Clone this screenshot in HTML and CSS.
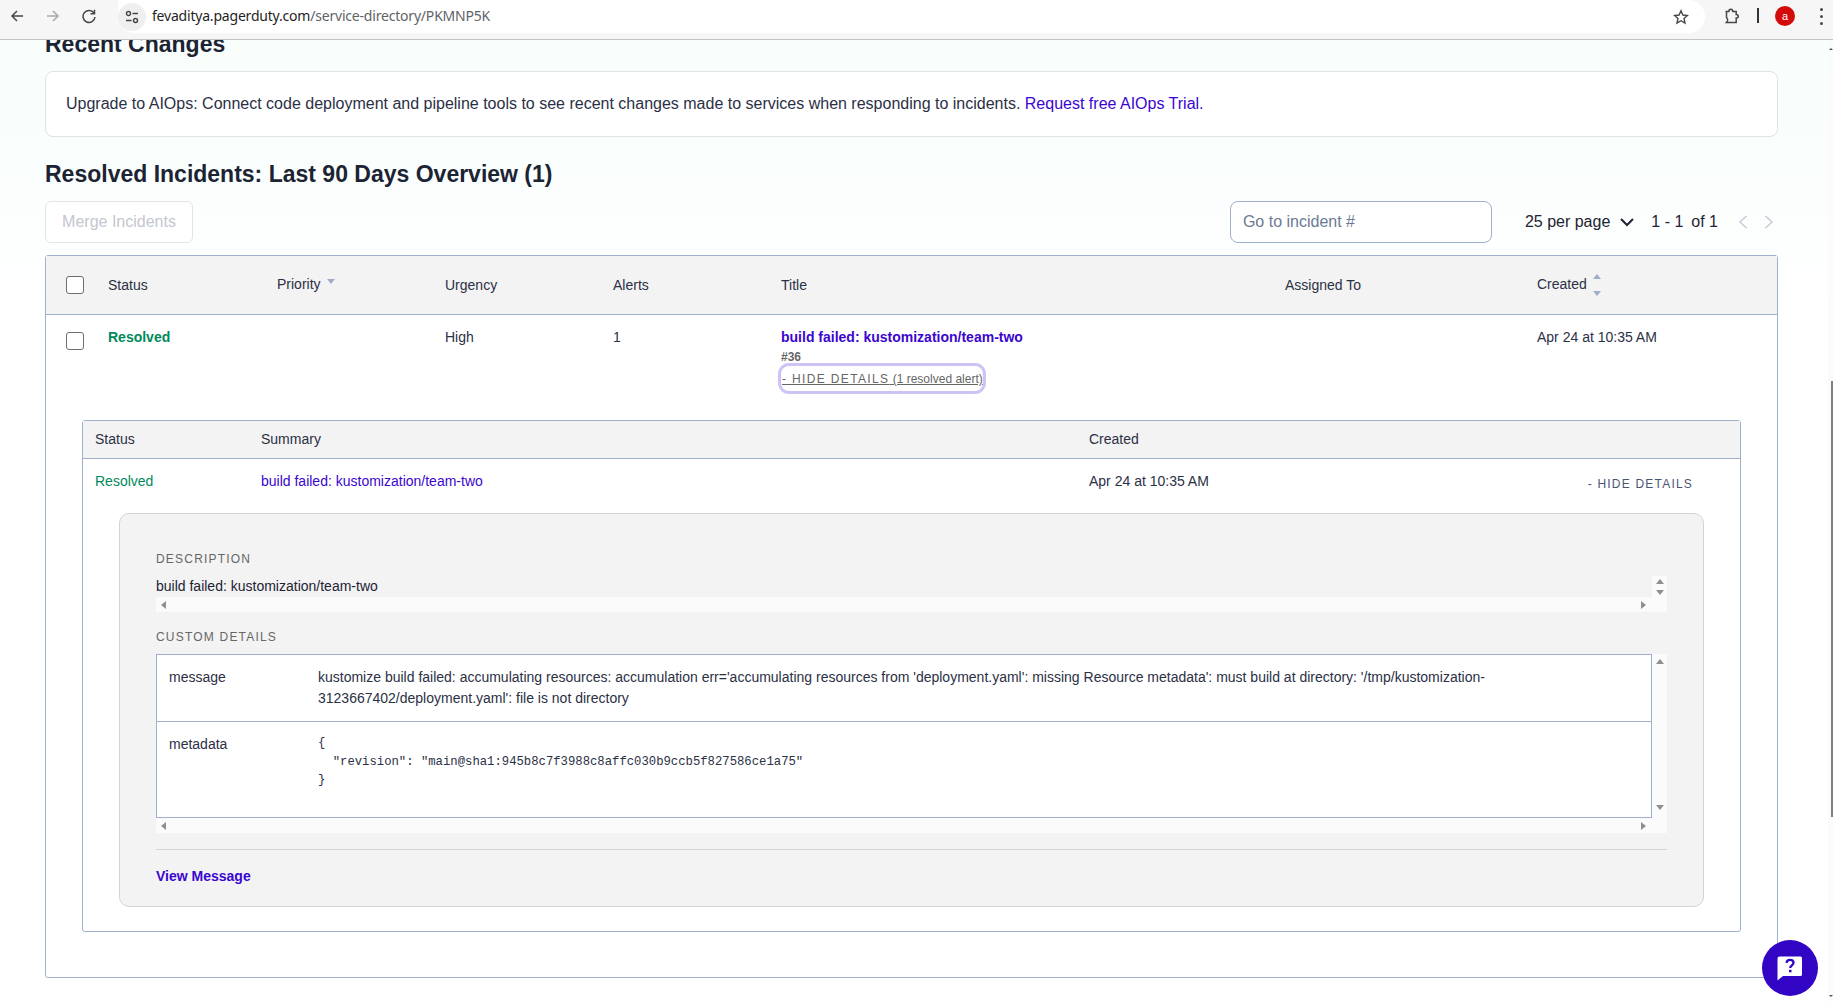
FILE: index.html
```html
<!DOCTYPE html>
<html>
	<head>
		<meta charset="utf-8">
		<title>Service Directory - PagerDuty</title>
		<link rel="stylesheet" href="styles.css">
	</head>
	<body>
		<!-- browser bar -->
		<div class="chrome">
			<svg class="nav-icon first" viewBox="0 0 16 16"><path d="M14 8H3M8 3L3 8l5 5" fill="none" stroke="#45474a" stroke-width="1.5"/></svg>
			<svg class="nav-icon" viewBox="0 0 16 16"><path d="M2 8h11M8 3l5 5-5 5" fill="none" stroke="#a8aaad" stroke-width="1.5"/></svg>
			<svg class="nav-icon" viewBox="0 0 16 16"><path d="M13.2 5.4A6 6 0 1 0 14 9M13.5 1.8v4h-4" fill="none" stroke="#45474a" stroke-width="1.5"/></svg>
			<div class="urlbar">
				<span class="tune">
					<svg width="14" height="14" viewBox="0 0 14 14"><circle cx="3.5" cy="3.5" r="2" fill="none" stroke="#45474a" stroke-width="1.4"/><path d="M7.5 3.5H13M1 10.5h5.500" stroke="#45474a" stroke-width="1.5"/><circle cx="10.500" cy="10.500" r="2" fill="none" stroke="#45474a" stroke-width="1.4"/></svg>
				</span>
				<span class="url">fevaditya.pagerduty.com<span class="url-path">/service-directory/PKMNP5K</span></span>
				<svg class="star" width="16" height="16" viewBox="0 0 16 16"><path d="M8 1.800l1.900 4.200 4.500.5-3.400 3 1 4.500-4-2.300-4 2.300 1-4.500-3.400-3 4.500-.5z" fill="none" stroke="#45474a" stroke-width="1.400"/></svg>
			</div>
			<svg class="puzzle" width="16" height="16" viewBox="0 0 16 16"><path d="M1.500 3.500h3.300c0-3 4-3 4 0h3.400v3c2.800 0 2.800 3.500 0 3.500v4.500H2.500c1.500-1.500 1.500-3.500 0-5v-6z" fill="none" stroke="#45474a" stroke-width="1.500"/></svg>
			<span class="bar-divider"></span>
			<span class="avatar">a</span>
			<span class="dots"><i></i><i></i><i></i></span>
		</div>

		<div class="page">
			<h2 class="clipped">Recent Changes</h2>
			<div class="upgrade">Upgrade to AIOps: Connect code deployment and pipeline tools to see recent changes made to services when responding to incidents. <a href="#">Request free AIOps Trial.</a></div>

			<h2 class="title">Resolved Incidents: Last 90 Days Overview (1)</h2>
			<div class="toolbar">
				<button class="merge">Merge Incidents</button>
				<input class="goto" placeholder="Go to incident #">
				<span class="per-page">25 per page</span>
				<svg class="chev" width="16" height="10" viewBox="0 0 16 10"><path d="M2 2l6 6 6-6" fill="none" stroke="#1c2333" stroke-width="2"/></svg>
				<span class="range">1 - 1</span>
				<span class="of">of 1</span>
				<svg class="pager" width="10" height="16" viewBox="0 0 10 16"><path d="M8.500 2L2 8l6.500 6" fill="none" stroke="#c5cad3" stroke-width="1.500"/></svg>
				<svg class="pager next" width="10" height="16" viewBox="0 0 10 16"><path d="M1.500 2L8 8l-6.500 6" fill="none" stroke="#c5cad3" stroke-width="1.500"/></svg>
			</div>

			<div class="incidents">
				<div class="inc-row inc-head">
					<span><input type="checkbox" class="check"></span>
					<span>Status</span>
					<span class="sort">Priority <i class="caret-down"></i></span>
					<span>Urgency</span>
					<span>Alerts</span>
					<span>Title</span>
					<span>Assigned To</span>
					<span class="sort">Created <i class="caret-both"><i class="caret-up"></i><i class="caret-down"></i></i></span>
				</div>
				<div class="inc-row inc-body">
					<span><input type="checkbox" class="check"></span>
					<span class="resolved">Resolved</span>
					<span></span>
					<span>High</span>
					<span>1</span>
					<div>
						<a class="inc-title" href="#">build failed: kustomization/team-two</a>
						<div class="inc-num">#36</div>
						<a class="toggle" href="#"><span class="caps">- HIDE DETAILS</span> (1 resolved alert)</a>
					</div>
					<span></span>
					<span>Apr 24 at 10:35 AM</span>
				</div>

				<div class="alerts">
					<div class="alert-row alert-head">
						<span>Status</span>
						<span>Summary</span>
						<span>Created</span>
					</div>
					<div class="alert-row alert-body">
						<span class="green">Resolved</span>
						<a href="#">build failed: kustomization/team-two</a>
						<span>Apr 24 at 10:35 AM</span>
						<span class="alert-toggle">- HIDE DETAILS</span>
					</div>

					<div class="panel">
						<div class="label">DESCRIPTION</div>
						<div class="scroller desc">
							<div class="desc-text">build failed: kustomization/team-two</div>
							<div class="vbar short"><i class="tri-up"></i><i class="tri-down"></i></div>
							<div class="hbar"><i class="tri-left"></i><i class="tri-right"></i></div>
						</div>

						<div class="label custom">CUSTOM DETAILS</div>
						<div class="scroller">
							<div class="details">
								<div class="detail-row first">
									<span>message</span>
									<div>kustomize build failed: accumulating resources: accumulation err='accumulating resources from 'deployment.yaml': missing Resource metadata': must build at directory: '/tmp/kustomization-3123667402/deployment.yaml': file is not directory</div>
								</div>
								<div class="detail-row">
									<span>metadata</span>
									<pre>{
  "revision": "main@sha1:945b8c7f3988c8affc030b9ccb5f827586ce1a75"
}</pre>
								</div>
							</div>
							<div class="vbar"><i class="tri-up"></i><i class="tri-down"></i></div>
							<div class="hbar"><i class="tri-left"></i><i class="tri-right"></i></div>
						</div>

						<hr>
						<a class="view-msg" href="#">View Message</a>
					</div>
				</div>
			</div>
		</div>

		<!-- overlays -->
		<div class="page-scroll"><i class="arrow-top"></i><i class="thumb"></i><i class="arrow-bottom"></i></div>
		<div class="help">
			<svg width="28" height="28" viewBox="0 0 28 28"><path d="M2.500 4.500a2 2 0 0 1 2-2h21a1.500 1.500 0 0 1 1.500 1.500v16.500a1.500 1.500 0 0 1-1.500 1.500H8l-5.500 4.500z" fill="#fff" transform="translate(-1 0)"/><path d="M10.500 8.800c.3-2 1.700-3 3.500-3 2 0 3.500 1.200 3.500 3 0 2.600-3.300 2.600-3.300 5.200" fill="none" stroke="#3204c4" stroke-width="2.300"/><rect x="13" y="15.800" width="2.500" height="2.500" fill="#3204c4"/></svg>
		</div>
	</body>
</html>
```

FILE: styles.css
```css
*{
	margin: 0;
	padding: 0;
	box-sizing: border-box;
}
html,body{
	height: 100%;
	overflow: hidden;
}
body{
	font-family: "Liberation Sans", Arial, sans-serif;
	font-size: 14px;
	line-height: 20px;
	color: #2b3045;
	background: linear-gradient(180deg, #f8fefc 0, #f9fefd 130px, #fff 300px);
}
a{
	color: #3a06d0;
	text-decoration: none;
}

/* browser bar */
.chrome{
	position: relative;
	z-index: 2;
	height: 40px;
	display: flex;
	align-items: flex-start;
	background: #f6f6f6;
	border-bottom: 1px solid #c4c4c4;
}
.nav-icon{
	width: 16px;
	height: 16px;
	margin: 8px 0 0 20px;
}
.nav-icon.first{
	margin-left: 9px;
}
.urlbar{
	width: 1587px;
	height: 33px;
	margin-left: 21px;
	display: flex;
	align-items: center;
	background: #fff;
	border-radius: 0 17px 17px 17px;
}
.tune{
	width: 28px;
	height: 28px;
	margin-left: 0;
	display: flex;
	align-items: center;
	justify-content: center;
	background: #efefef;
	border-radius: 50%;
}
.url{
	margin-left: 6px;
	padding-bottom: 2px;
	font-family: "Noto Sans", sans-serif;
	font-size: 14px;
	letter-spacing: -0.2px;
	color: #1f1f1f;
}
.url-path{
	color: #5f6368;
}
.star{
	margin-left: auto;
	margin-right: 16px;
}
.puzzle{
	margin: 8px 0 0 19px;
}
.bar-divider{
	width: 2px;
	height: 15px;
	margin: 8px 0 0 17px;
	background: #333;
}
.avatar{
	width: 20px;
	height: 20px;
	margin: 6px 0 0 16px;
	border-radius: 50%;
	background: #d30b0b;
	color: #fff;
	font-size: 11px;
	line-height: 20px;
	text-align: center;
}
.dots{
	display: flex;
	flex-direction: column;
	gap: 4px;
	margin: 8px 0 0 25px;
}
.dots i{
	width: 3px;
	height: 3px;
	border-radius: 50%;
	background: #45474a;
}

/* page */
.page{
	padding: 0 55px 0 45px;
}
h2{
	font-size: 23px;
	line-height: 32px;
	font-weight: bold;
	color: #1c2333;
}
.clipped{
	margin-top: -12px;
}
.upgrade{
	height: 66px;
	margin-top: 11px;
	padding: 22px 20px;
	font-size: 16px;
	line-height: 20px;
	background: #fff;
	border: 1px solid #dfe3e6;
	border-radius: 8px;
}
.title{
	margin-top: 21px;
}
.toolbar{
	height: 42px;
	margin-top: 11px;
	display: flex;
	align-items: center;
	font-size: 16px;
	color: #1c2333;
}
.merge{
	width: 148px;
	height: 42px;
	font: 16px "Liberation Sans", Arial, sans-serif;
	color: #c3c7cf;
	background: #fff;
	border: 1px solid #e2e4e8;
	border-radius: 6px;
}
.goto{
	width: 262px;
	height: 42px;
	margin-left: auto;
	padding: 0 12px;
	font: 16px "Liberation Sans", Arial, sans-serif;
	background: #fff;
	border: 1px solid #9fb0cc;
	border-radius: 8px;
}
.goto::placeholder{
	color: #6b7a94;
}
.per-page{
	margin-left: 33px;
}
.chev{
	margin-left: 9px;
}
.range{
	margin-left: 16px;
}
.of{
	margin-left: 8px;
}
.pager{
	margin-left: 20px;
}
.pager.next{
	margin-left: 16px;
	margin-right: 4px;
}

/* incidents table */
.incidents{
	margin-top: 12px;
	padding-bottom: 45px;
	background: #fff;
	border: 1px solid #9fb0cc;
	border-radius: 3px;
}
.inc-row{
	display: grid;
	grid-template-columns: 62px 168px 168px 168px 168px 504px 252px 1fr;
}
.inc-head{
	height: 59px;
	align-items: center;
	background: #f3f3f3;
	border-bottom: 1px solid #9fb0cc;
}
.inc-body{
	padding-top: 12px;
}
.inc-row > :nth-child(n+3){
	padding-left: 1px;
}
.check{
	appearance: none;
	display: block;
	width: 18px;
	height: 18px;
	margin-left: 20px;
	background: #fff;
	border: 1px solid #6d6d6d;
	border-radius: 3px;
}
.inc-body .check{
	margin-top: 5px;
}
.sort{
	display: flex;
	align-items: center;
	gap: 6px;
	margin-top: -2px;
}
.caret-down,.caret-up{
	display: block;
	width: 0;
	height: 0;
	border-left: 4.500px solid transparent;
	border-right: 4.500px solid transparent;
}
.caret-down{
	border-top: 5px solid #a0adc6;
}
.sort > .caret-down{
	margin-top: -5px;
}
.caret-up{
	border-bottom: 5px solid #a0adc6;
}
.caret-both{
	display: flex;
	flex-direction: column;
	gap: 12px;
	margin-top: 2px;
}
.resolved{
	font-weight: bold;
	color: #008a5c;
}
.inc-title{
	display: block;
	font-weight: bold;
}
.inc-num{
	margin-top: 2px;
	font-size: 12px;
	line-height: 16px;
	font-weight: bold;
	color: #666;
}
.toggle{
	display: block;
	width: 202px;
	height: 25px;
	margin-top: 1px;
	padding-left: 1px;
	font-size: 12px;
	line-height: 27px;
	color: #666;
	text-decoration: underline;
	white-space: nowrap;
	border-radius: 8px;
	box-shadow: 0 0 0 3px #cfc3f5;
}
.caps{
	letter-spacing: 1.350px;
}

/* alerts inside the incident */
.alerts{
	margin: 29px 36px 0 36px;
	padding-bottom: 24px;
	border: 1px solid #9fb0cc;
	border-radius: 3px;
}
.alert-row{
	display: grid;
	grid-template-columns: 166px 828px 1fr auto;
	padding-left: 12px;
}
.alert-head{
	height: 38px;
	padding-bottom: 2px;
	align-items: center;
	background: #f3f3f3;
	border-bottom: 1px solid #9fb0cc;
}
.alert-body{
	padding-top: 12px;
}
.green{
	color: #008a5c;
}
.alert-toggle{
	margin: 3px 47px 0 0;
	font-size: 12px;
	letter-spacing: 1.200px;
	color: #4b5573;
}
.panel{
	margin: 19px 36px 0 36px;
	padding: 37px 36px 20px 36px;
	background: #f3f3f3;
	border: 1px solid #d4d4d4;
	border-radius: 10px;
}
.label{
	font-size: 12px;
	line-height: 16px;
	letter-spacing: 1.200px;
	color: #666;
}
.label.custom{
	margin-top: 17px;
}
.scroller{
	display: grid;
	grid-template-columns: 1fr 15px;
	margin-top: 9px;
}
.desc-text{
	height: 21px;
	color: #1c2333;
}
.vbar{
	display: flex;
	flex-direction: column;
	align-items: center;
	justify-content: space-between;
	padding: 5px 0 8px;
	background: #fbfbfb;
}
.vbar.short{
	grid-row: 1 / 3;
	grid-column: 2;
	justify-content: flex-start;
	gap: 6px;
	padding: 3px 0 0;
}
.hbar{
	grid-column: 1 / 3;
	height: 15px;
	display: flex;
	align-items: center;
	justify-content: space-between;
	padding: 0 21px 0 5px;
	background: #fbfbfb;
}
.desc .hbar{
	grid-column: 1;
	padding-right: 6px;
}
.tri-up,.tri-down{
	display: block;
	width: 0;
	height: 0;
	border-left: 4.500px solid transparent;
	border-right: 4.500px solid transparent;
}
.tri-up{
	border-bottom: 5px solid #8f8f8f;
}
.tri-down{
	border-top: 5px solid #8f8f8f;
}
.tri-left,.tri-right{
	display: block;
	width: 0;
	height: 0;
	border-top: 4.500px solid transparent;
	border-bottom: 4.500px solid transparent;
}
.tri-left{
	border-right: 5px solid #8f8f8f;
}
.tri-right{
	border-left: 5px solid #8f8f8f;
}
.details{
	height: 164px;
	background: #fff;
	border: 1px solid #9fb0cc;
}
.detail-row{
	display: grid;
	grid-template-columns: 149px 1fr;
	padding: 12px 40px 0 12px;
}
.detail-row.first{
	height: 67px;
	line-height: 21px;
	border-bottom: 1px solid #9fb0cc;
}
.detail-row pre{
	font-family: "Liberation Mono", monospace;
	font-size: 12.250px;
	line-height: 18.500px;
	color: #2b3045;
}
hr{
	height: 1px;
	margin-top: 16px;
	background: #d4d4d4;
	border: 0;
}
.view-msg{
	display: block;
	margin-top: 16px;
	font-weight: bold;
}

/* things on top of the page */
.page-scroll{
	position: absolute;
	top: 40px;
	right: 0;
	bottom: 0;
	width: 5px;
	background: #fbfbfb;
}
.thumb{
	position: absolute;
	top: 341px;
	right: 0;
	width: 2px;
	height: 436px;
	background: #7f7f7f;
}
.arrow-top,.arrow-bottom{
	position: absolute;
	right: 0;
	width: 0;
	height: 0;
	border-left: 2px solid transparent;
	border-right: 2px solid transparent;
}
.arrow-top{
	top: 8px;
	border-bottom: 2px solid #555;
}
.arrow-bottom{
	bottom: 4px;
	border-top: 2px solid #555;
}
.help{
	position: absolute;
	left: 1762px;
	top: 940px;
	width: 56px;
	height: 56px;
	display: flex;
	align-items: center;
	justify-content: center;
	background: #3204c4;
	border-radius: 50%;
}
```
